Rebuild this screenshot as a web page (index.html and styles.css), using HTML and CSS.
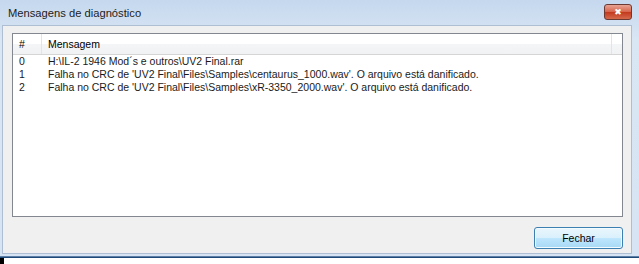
FILE: index.html
```html
<html>

<head>
  <title>Mensagens de diagnóstico</title>
  <meta charset="UTF-8">
  <link rel="stylesheet" href="styles.css">
</head>

<body>
  <div class="window">
    <div class="titlebar">
      <span class="title">Mensagens de diagnóstico</span>
      <span class="close">&#10006;</span>
    </div>
    <div class="client">
      <div class="list">
        <div class="head">
          <div class="col num">#</div>
          <div class="col msg">Mensagem</div>
          <div class="col rest"></div>
        </div>
        <div class="rows">
          <div class="row"><span class="num">0</span><span class="msg">H:\IL-2 1946 Mod´s e outros\UV2 Final.rar</span></div>
          <div class="row"><span class="num">1</span><span class="msg">Falha no CRC de 'UV2 Final\Files\Samples\centaurus_1000.wav'. O arquivo está danificado.</span></div>
          <div class="row"><span class="num">2</span><span class="msg">Falha no CRC de 'UV2 Final\Files\Samples\xR-3350_2000.wav'. O arquivo está danificado.</span></div>
        </div>
      </div>
      <div class="buttons">
        <button class="btn">Fechar</button>
      </div>
    </div>
  </div>
  <div class="taskbar">
    <span class="mark"></span>
  </div>
</body>

</html>
```

FILE: styles.css
```css
body {
  margin: 0;
  background: #ffffff;
  font-family: "Liberation Sans", "DejaVu Sans", sans-serif;
  font-size: 10.5px;
  color: #000;
}

.window {
  width: 639px;
  height: 257px;
  box-sizing: border-box;
  background: linear-gradient(#c5d8ee, #d9e6f4 40px, #d6e4f3);
  padding: 0 7px 2px 2px;
  border-bottom: 1px solid #5d7fa6;
  display: flex;
  flex-direction: column;
}

.titlebar {
  height: 25px;
  display: flex;
  align-items: center;
  justify-content: space-between;
}

.title {
  font-size: 11.2px;
  color: #1c1c1c;
  padding-left: 6px;
}

.close {
  width: 26px;
  height: 14px;
  margin-top: -1px;
  border: 1px solid #6b3a33;
  border-radius: 3px;
  background: linear-gradient(#e8a393, #d7644b 50%, #c2391d 51%, #d66a4c);
  color: #fff;
  font-size: 9px;
  font-weight: bold;
  line-height: 14px;
  text-align: center;
}

.client {
  flex: 1;
  background: #f0f0f0;
  border: 1px solid #aebfd4;
  padding: 7px 8px 4px 9px;
  display: flex;
  flex-direction: column;
}

.list {
  flex: 1;
  background: #fff;
  border: 1px solid #828790;
  display: flex;
  flex-direction: column;
}

.head {
  height: 20px;
  display: flex;
  background: linear-gradient(#ffffff, #ffffff 50%, #f4f5f7 51%, #f1f2f4);
  border-bottom: 1px solid #d5d5d5;
}

.head .col {
  line-height: 20px;
  border-right: 1px solid #e3e4e6;
  padding-left: 6px;
  box-sizing: border-box;
}

.head .num {
  width: 29px;
}

.head .msg {
  width: 570px;
}

.head .rest {
  flex: 1;
  border-right: 0;
}

.rows {
  padding-top: 0;
}

.row {
  height: 13px;
  line-height: 13px;
  display: flex;
  color: #1a1a1a;
}

.row .num {
  width: 29px;
  padding-left: 6px;
  box-sizing: border-box;
}

.row .msg {
  padding-left: 6px;
  white-space: nowrap;
}

.buttons {
  display: flex;
  justify-content: flex-end;
  padding-top: 10px;
}

.btn {
  width: 89px;
  height: 22px;
  font-family: "Liberation Sans", "DejaVu Sans", sans-serif;
  font-size: 10.5px;
  color: #000;
  border: 1px solid #3c7fb1;
  border-radius: 3px;
  background: linear-gradient(#eaf6fd, #d9f0fc 50%, #bee6fd 51%, #a7d9f5);
  box-shadow: inset 0 0 0 1px #f4fbff;
  padding: 0;
}

.taskbar {
  height: 6px;
  background: #fff;
  border-top: 1px solid #1d4a78;
  position: relative;
}

.mark {
  position: absolute;
  left: 0;
  top: 0;
  width: 4px;
  height: 6px;
  background: #000;
}
```
